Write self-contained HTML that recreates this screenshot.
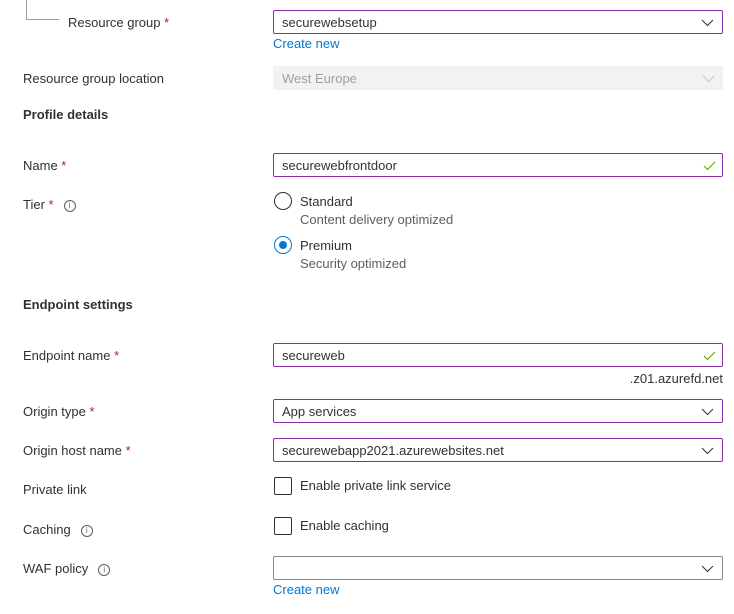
<!DOCTYPE html>
<html><head><style>
body{margin:0;width:734px;height:614px;background:#fff;font-family:"Liberation Sans",sans-serif;font-size:13px;color:#323130;position:relative;overflow:hidden}
.a{position:absolute;white-space:nowrap;line-height:16px;margin-top:1px}
.lbl{left:23px}
.req{color:#a4262c}
.box{position:absolute;left:273px;width:448px;height:22px;border:1px solid #8a2da5;border-radius:2px}
.box span{position:absolute;left:8px;top:4px;line-height:16px}
.chev{position:absolute;right:8px;top:7px}
.chk{position:absolute;right:6px;top:6px}
.link{color:#0078d4}
.info{display:inline-block;width:10px;height:10px;border:1px solid #605e5c;border-radius:50%;font-size:8px;line-height:10px;text-align:center;color:#605e5c;vertical-align:1px;margin-left:10px}
.cb{position:absolute;left:274px;width:16px;height:16px;border:1px solid #323130;border-radius:2px}
.b{font-weight:bold}
</style></head><body>
<div style="position:absolute;left:26px;top:0;width:1px;height:19px;background:#a19f9d"></div>
<div style="position:absolute;left:26px;top:19px;width:33px;height:1px;background:#a19f9d"></div>
<div class="a" style="left:68px;top:14px">Resource group <span class="req">*</span></div>
<div class="box" style="top:10px"><span>securewebsetup</span><svg class="chev" width="13" height="9"><path d="M1 2l5.5 5.5L12 2" fill="none" stroke="#323130" stroke-width="1"/></svg></div>
<div class="a link" style="left:273px;top:35px">Create new</div>
<div class="a lbl" style="top:70px">Resource group location</div>
<div style="position:absolute;left:273px;top:66px;width:450px;height:24px;background:#f3f2f1;border-radius:2px"><span class="a" style="left:9px;top:4px;color:#a19f9d">West Europe</span><svg class="chev" width="13" height="9" style="right:8px;top:8px"><path d="M1 2l5.5 5.5L12 2" fill="none" stroke="#c8c6c4" stroke-width="1"/></svg></div>
<div class="a lbl b" style="top:106px">Profile details</div>
<div class="a lbl" style="top:157px">Name <span class="req">*</span></div>
<div class="box" style="top:153px"><span>securewebfrontdoor</span><svg class="chk" width="13" height="11"><path d="M1 6l3.5 3.5L12 2" fill="none" stroke="#57a300" stroke-width="1"/></svg></div>
<div class="a lbl" style="top:196px">Tier <span class="req">*</span><span class="info">i</span></div>
<div style="position:absolute;left:274px;top:192px;width:16px;height:16px;border:1px solid #323130;border-radius:50%"></div>
<div class="a" style="left:300px;top:193px">Standard</div>
<div class="a" style="left:300px;top:211px;color:#605e5c">Content delivery optimized</div>
<div style="position:absolute;left:274px;top:236px;width:16px;height:16px;border:1px solid #0078d4;border-radius:50%"></div>
<div style="position:absolute;left:279px;top:241px;width:8px;height:8px;background:#0078d4;border-radius:50%"></div>
<div class="a" style="left:300px;top:237px">Premium</div>
<div class="a" style="left:300px;top:255px;color:#605e5c">Security optimized</div>
<div class="a lbl b" style="top:296px">Endpoint settings</div>
<div class="a lbl" style="top:347px">Endpoint name <span class="req">*</span></div>
<div class="box" style="top:343px"><span>secureweb</span><svg class="chk" width="13" height="11"><path d="M1 6l3.5 3.5L12 2" fill="none" stroke="#57a300" stroke-width="1"/></svg></div>
<div class="a" style="right:11px;top:370px">.z01.azurefd.net</div>
<div class="a lbl" style="top:403px">Origin type <span class="req">*</span></div>
<div class="box" style="top:399px"><span>App services</span><svg class="chev" width="13" height="9"><path d="M1 2l5.5 5.5L12 2" fill="none" stroke="#323130" stroke-width="1"/></svg></div>
<div class="a lbl" style="top:442px">Origin host name <span class="req">*</span></div>
<div class="box" style="top:438px"><span>securewebapp2021.azurewebsites.net</span><svg class="chev" width="13" height="9"><path d="M1 2l5.5 5.5L12 2" fill="none" stroke="#323130" stroke-width="1"/></svg></div>
<div class="a lbl" style="top:481px">Private link</div>
<div class="cb" style="top:477px"></div>
<div class="a" style="left:300px;top:477px">Enable private link service</div>
<div class="a lbl" style="top:521px">Caching<span class="info">i</span></div>
<div class="cb" style="top:517px"></div>
<div class="a" style="left:300px;top:517px">Enable caching</div>
<div class="a lbl" style="top:560px">WAF policy<span class="info">i</span></div>
<div class="box" style="top:556px;border-color:#8a8886"><svg class="chev" width="13" height="9"><path d="M1 2l5.5 5.5L12 2" fill="none" stroke="#323130" stroke-width="1"/></svg></div>
<div class="a link" style="left:273px;top:581px">Create new</div>
</body></html>
